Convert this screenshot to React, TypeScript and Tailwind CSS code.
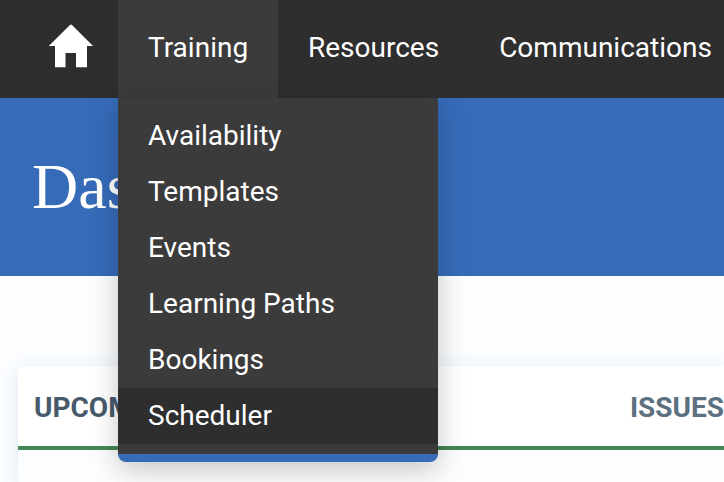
import React from "react";

const links = ["Resources", "Communications"];

const trainingItems = [
  "Availability",
  "Templates",
  "Events",
  "Learning Paths",
  "Bookings",
  "Scheduler",
];

const HomeIcon = () => (
  <svg viewBox="0 0 46 44" className="w-[46px] h-11" fill="currentColor">
    <path d="M23 0 45 22H39V43.2H28V29H17.5V43.2H7V22H0.8L22 1Q23 0 24 1Z" />
  </svg>
);

const TrainingMenu = () => (
  <div className="relative w-40 shrink-0">
    <button
      type="button"
      aria-expanded="true"
      className="w-full h-full pl-[30px] pb-0.5 text-left bg-[#3b3b3b]"
    >
      Training
    </button>
    <ul className="absolute left-0 top-full w-80 py-2.5 bg-[#3b3b3b] border-b-8 border-[#366bb8] rounded-b-lg shadow-[0_8px_28px_rgba(0,0,0,0.22)]">
      {trainingItems.map((item) => (
        <li key={item}>
          <a
            href="#"
            className={
              item === "Scheduler"
                ? "block px-[30px] py-2 leading-10 bg-[#2e2e2e]"
                : "block px-[30px] py-2 leading-10"
            }
          >
            {item}
          </a>
        </li>
      ))}
    </ul>
  </div>
);

const App = () => {
  return (
    <div className="min-h-screen flex flex-col overflow-hidden bg-[#fbfdff] font-['Roboto',sans-serif]">
      <nav className="relative z-10 h-[98px] flex items-stretch text-[28px] text-white bg-[#2e2e2e]">
        <a
          href="#"
          aria-label="Home"
          className="w-[118px] shrink-0 flex items-center pl-12 pb-1.5"
        >
          <HomeIcon />
        </a>
        <TrainingMenu />
        {links.map((link) => (
          <a key={link} href="#" className="flex items-center px-[30px] pb-0.5">
            {link}
          </a>
        ))}
      </nav>
      <header className="h-[178px] flex items-center px-8 bg-[#366bb8]">
        <h1 className="text-[64px] leading-none font-light text-white font-['Roboto_Slab','Liberation_Serif',serif]">
          Dashboard
        </h1>
      </header>
      <main className="flex-1 flex flex-col pt-[90px] pl-[18px]">
        <section className="flex-1 rounded-tl-md shadow-[0_4px_20px_rgba(54,107,184,0.14)]">
          <div className="h-[84px] flex items-center justify-between pl-4 pt-1 text-[28px] font-bold bg-white border-b-4 border-[#448655] rounded-tl-md">
            <h2 className="text-[#475a6b]">UPCOMING</h2>
            <h2 className="text-[#5c7080]">ISSUES</h2>
          </div>
        </section>
      </main>
    </div>
  );
};

export default App;
